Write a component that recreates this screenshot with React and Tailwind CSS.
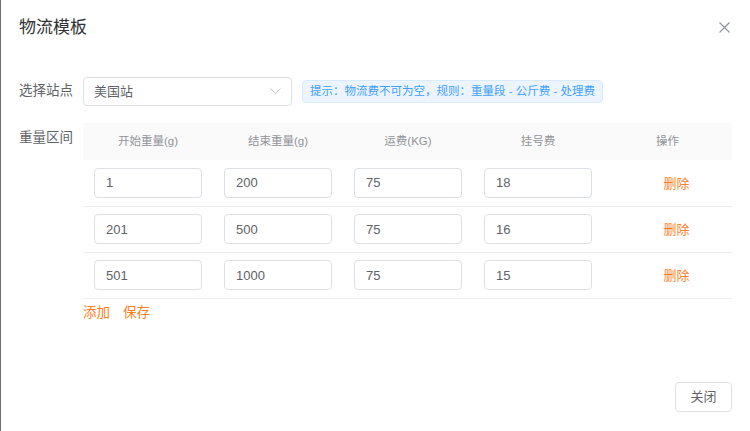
import { useState } from 'react'

const initialRows = [
  { start: '1', end: '200', fee: '75', reg: '18' },
  { start: '201', end: '500', fee: '75', reg: '16' },
  { start: '501', end: '1000', fee: '75', reg: '15' },
]

const headers = ['开始重量(g)', '结束重量(g)', '运费(KG)', '挂号费', '操作']

export default function App() {
  const [rows, setRows] = useState(initialRows)

  const update = (i, key, value) => {
    setRows(rows.map((r, idx) => (idx === i ? { ...r, [key]: value } : r)))
  }

  const inputCls =
    'w-[108px] h-[30px] border border-[#dcdfe6] rounded-[4px] px-[11px] text-[13px] text-[#606266] outline-none'

  return (
    <div
      className="flex w-[750px] h-[431px] bg-white overflow-hidden"
      style={{ fontFamily: '"Liberation Sans", "Noto Sans CJK SC", sans-serif' }}
    >
      <div className="w-px bg-[#6f6f6f] shrink-0" />
      <div className="flex-1 flex flex-col pl-[18px] pr-[18px]">
        <div className="flex items-center justify-between h-[54px] pt-[2px]">
          <h1 className="text-[17px] text-[#303133]">物流模板</h1>
          <button className="text-[#909399] mr-[2px] mb-[2px]">
            <svg width="11" height="11" viewBox="0 0 11 11" stroke="currentColor" strokeWidth="1.1">
              <path d="M0.5 0.5 L10.5 10.5 M10.5 0.5 L0.5 10.5" />
            </svg>
          </button>
        </div>

        <div className="flex items-center mt-[23px]">
          <label className="w-[64px] text-[13.5px] text-[#606266]">选择站点</label>
          <div className="w-[209px] h-[29px] border border-[#dcdfe6] rounded-[4px] flex items-center justify-between px-[10px]">
            <span className="text-[13px] text-[#606266]">美国站</span>
            <svg width="11" height="7" viewBox="0 0 11 7" fill="none" stroke="#c0c4cc" strokeWidth="1">
              <path d="M0.5 0.5 L5.5 5.5 L10.5 0.5" />
            </svg>
          </div>
          <div className="ml-[10px] h-[23px] px-[7px] flex items-center bg-[#ecf5ff] border border-[#d9ecff] rounded-[4px] text-[11.5px] text-[#409eff]">
            提示：物流费不可为空，规则：重量段 - 公斤费 - 处理费
          </div>
        </div>

        <div className="flex mt-[17px]">
          <label className="w-[64px] text-[13.5px] text-[#606266] pt-[5px]">重量区间</label>
          <div className="flex-1">
            <table className="w-[649px] table-fixed border-collapse">
              <thead>
                <tr className="bg-[#fafafa] h-[37px]">
                  {headers.map((h, i) => (
                    <th
                      key={h}
                      className={`font-normal text-[11.5px] text-[#909399] ${i === 4 ? 'w-[129px]' : 'w-[130px]'}`}
                    >
                      {h}
                    </th>
                  ))}
                </tr>
              </thead>
              <tbody>
                {rows.map((r, i) => (
                  <tr key={i} className="h-[46px] border-b border-[#ebeef5]">
                    {['start', 'end', 'fee', 'reg'].map((k) => (
                      <td key={k} className="pl-[11px]">
                        <input className={inputCls} value={r[k]} onChange={(e) => update(i, k, e.target.value)} />
                      </td>
                    ))}
                    <td className="text-center pl-[18px]">
                      <button
                        className="text-[13px] text-[#ff7f24]"
                        onClick={() => setRows(rows.filter((_, idx) => idx !== i))}
                      >
                        删除
                      </button>
                    </td>
                  </tr>
                ))}
              </tbody>
            </table>
            <div className="flex gap-[13px] mt-[4px] text-[13.5px] text-[#ff7f24]">
              <button onClick={() => setRows([...rows, { start: '', end: '', fee: '', reg: '' }])}>添加</button>
              <button>保存</button>
            </div>
          </div>
        </div>

        <div className="flex-1" />
        <div className="flex justify-end pb-[19px]">
          <button className="w-[57px] h-[30px] border border-[#dcdfe6] rounded-[4px] text-[13px] text-[#606266]">
            关闭
          </button>
        </div>
      </div>
    </div>
  )
}
